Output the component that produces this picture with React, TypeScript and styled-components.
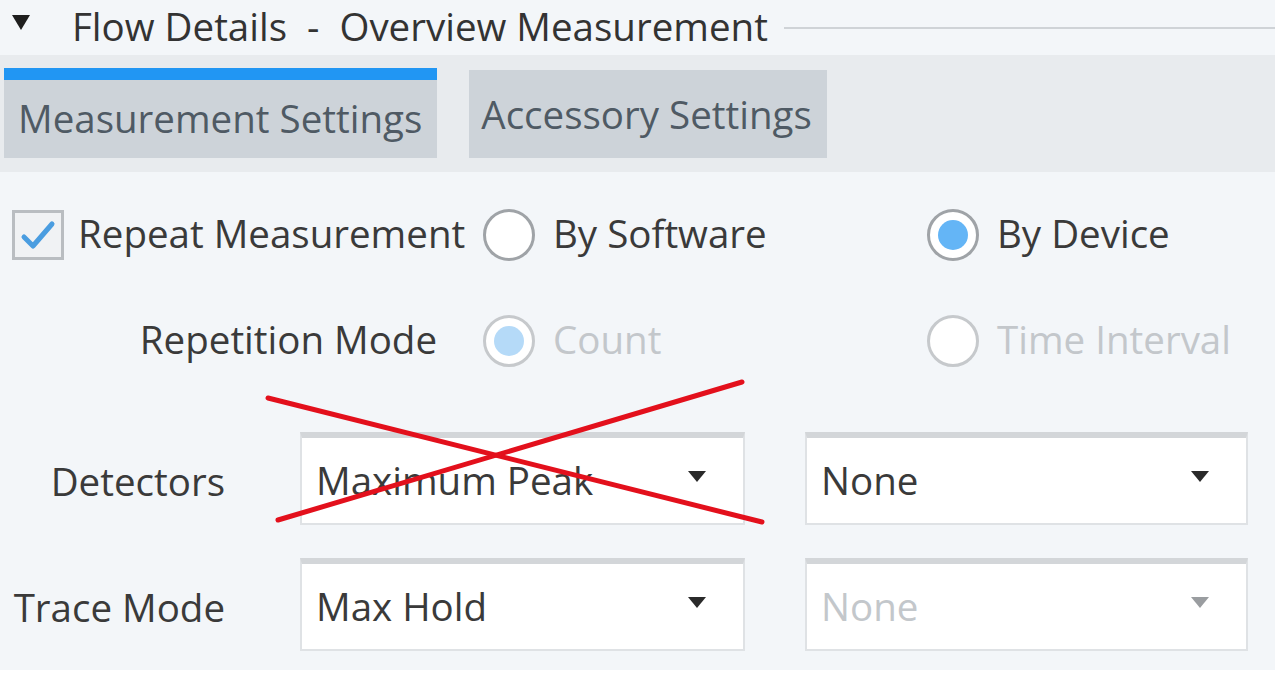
import React from "react";
import styled, { createGlobalStyle } from "styled-components";

const Global = createGlobalStyle`
  html, body { margin: 0; padding: 0; background: #ffffff; }
  body { width: 1280px; height: 693px; overflow: hidden; font-family: "Open Sans", "Noto Sans", sans-serif; }
  * { box-sizing: border-box; }
`;

const Page = styled.div`
  position: relative;
  width: 1280px;
  height: 693px;
  background: #ffffff;
  display: flex;
  flex-direction: column;
`;

const Panel = styled.div`
  width: 1275px;
  height: 670px;
  background: #f3f6f9;
  display: flex;
  flex-direction: column;
`;

const Header = styled.div`
  height: 55px;
  display: flex;
  align-items: flex-start;
  padding-left: 12px;
`;

const Caret = styled.span`
  width: 0;
  height: 0;
  border-left: 9px solid transparent;
  border-right: 9px solid transparent;
  border-top: 15px solid #1e1e1e;
  margin-top: 15px;
`;

const Title = styled.span`
  margin-left: 42px;
  font-size: 38.5px;
  color: #333333;
  white-space: pre;
  line-height: 53px;
  flex-shrink: 0;
`;

const Rule = styled.span`
  flex: 1;
  height: 2px;
  background: #cfd3d7;
  margin-left: 16px;
  margin-top: 27px;
`;

const TabBar = styled.div`
  height: 117px;
  background: #e8ebee;
  display: flex;
  align-items: flex-start;
  gap: 32px;
  padding: 13px 0 0 4px;
`;

const Tab = styled.div<{ $active?: boolean }>`
  height: ${(p) => (p.$active ? 90 : 88)}px;
  margin-top: ${(p) => (p.$active ? 0 : 2)}px;
  background: #cdd3d9;
  border-top: ${(p) => (p.$active ? "12px solid #2196f3" : "0")};
  padding: ${(p) => (p.$active ? "0 15px 2px 14px" : "0 15px 0 12px")};
  display: flex;
  align-items: center;
  font-size: 38.5px;
  color: #4f5a64;
  white-space: nowrap;
`;

const Content = styled.div`
  padding-top: 33px;
  display: flex;
  flex-direction: column;
`;

const OptionGrid = styled.div`
  display: grid;
  grid-template-columns: 483px 444px 1fr;
  grid-auto-rows: 60px;
  row-gap: 46px;
  align-items: center;
`;

const LeadCell = styled.div<{ $right?: boolean }>`
  display: flex;
  align-items: center;
  justify-content: ${(p) => (p.$right ? "flex-end" : "flex-start")};
  padding-left: ${(p) => (p.$right ? 0 : 12)}px;
  padding-right: ${(p) => (p.$right ? 46 : 0)}px;
  gap: 14px;
`;

const Text = styled.span<{ $disabled?: boolean }>`
  font-size: 38.5px;
  color: ${(p) => (p.$disabled ? "#c3c7cb" : "#3a3a3a")};
  white-space: nowrap;
  line-height: 1.25;
  margin-top: -4px;
`;

const CheckBox = styled.span`
  width: 52px;
  height: 50px;
  border: 3px solid #b9bdc1;
  background: #f0f2f4;
  display: flex;
  align-items: center;
  justify-content: center;
  flex-shrink: 0;
`;

const RadioOption = styled.div`
  display: flex;
  align-items: center;
  gap: 18px;
`;

const Radio = styled.span<{ $checked?: boolean; $disabled?: boolean }>`
  width: 52px;
  height: 52px;
  flex-shrink: 0;
  border-radius: 50%;
  border: 3px solid ${(p) => (p.$disabled ? "#c6c9cc" : "#9fa3a7")};
  background: #ffffff;
  display: flex;
  align-items: center;
  justify-content: center;
  &::after {
    content: "";
    width: 30px;
    height: 30px;
    border-radius: 50%;
    background: ${(p) => (p.$disabled ? "#b5daf8" : "#64b5f6")};
    display: ${(p) => (p.$checked ? "block" : "none")};
  }
`;

const SelectGrid = styled.div`
  margin-top: 61px;
  display: grid;
  grid-template-columns: 240px 445px 443px;
  column-gap: 60px;
  row-gap: 33px;
  grid-auto-rows: 93px;
  align-items: center;
`;

const FieldLabel = styled.span`
  justify-self: end;
  padding-right: 15px;
  font-size: 38.5px;
  color: #3a3a3a;
  white-space: nowrap;
  margin-top: 4px;
`;

const Select = styled.div<{ $disabled?: boolean }>`
  height: 93px;
  background: #ffffff;
  border: 2px solid #dfe2e5;
  border-top: 6px solid #d3d6d9;
  display: flex;
  align-items: center;
  padding: 0 37px 0 14px;
  font-size: 38.5px;
  color: ${(p) => (p.$disabled ? "#c3c7cb" : "#3a3a3a")};
`;

const SelectValue = styled.span`
  flex: 1;
  white-space: nowrap;
  margin-top: -2px;
`;

const Arrow = styled.span<{ $disabled?: boolean }>`
  width: 0;
  height: 0;
  border-left: 9px solid transparent;
  border-right: 9px solid transparent;
  border-top: 11px solid ${(p) => (p.$disabled ? "#9a9da0" : "#2a2a2a")};
  margin-top: -8px;
`;

const Cross = styled.svg`
  position: absolute;
  left: 0;
  top: 0;
  pointer-events: none;
`;

const Check = () => (
  <svg width="36" height="30" viewBox="0 0 36 30">
    <path d="M4 17 L13 26 L32 4" fill="none" stroke="#4a9de0" strokeWidth="5" strokeLinecap="round" strokeLinejoin="round" />
  </svg>
);

export default function App() {
  return (
    <Page>
      <Global />
      <Panel>
        <Header>
          <Caret />
          <Title>{"Flow Details  -  Overview Measurement"}</Title>
          <Rule />
        </Header>
        <TabBar>
          <Tab $active>Measurement Settings</Tab>
          <Tab>Accessory Settings</Tab>
        </TabBar>
        <Content>
          <OptionGrid>
            <LeadCell>
              <CheckBox>
                <Check />
              </CheckBox>
              <Text>Repeat Measurement</Text>
            </LeadCell>
            <RadioOption>
              <Radio />
              <Text>By Software</Text>
            </RadioOption>
            <RadioOption>
              <Radio $checked />
              <Text>By Device</Text>
            </RadioOption>

            <LeadCell $right>
              <Text>Repetition Mode</Text>
            </LeadCell>
            <RadioOption>
              <Radio $checked $disabled />
              <Text $disabled>Count</Text>
            </RadioOption>
            <RadioOption>
              <Radio $disabled />
              <Text $disabled>Time Interval</Text>
            </RadioOption>
          </OptionGrid>
          <SelectGrid>
            <FieldLabel>Detectors</FieldLabel>
            <Select>
              <SelectValue>Maximum Peak</SelectValue>
              <Arrow />
            </Select>
            <Select>
              <SelectValue>None</SelectValue>
              <Arrow />
            </Select>

            <FieldLabel>Trace Mode</FieldLabel>
            <Select>
              <SelectValue>Max Hold</SelectValue>
              <Arrow />
            </Select>
            <Select $disabled>
              <SelectValue>None</SelectValue>
              <Arrow $disabled />
            </Select>
          </SelectGrid>
        </Content>
      </Panel>
      <Cross width="1280" height="693" viewBox="0 0 1280 693">
        <line x1="268" y1="398" x2="762" y2="522" stroke="#e3101c" strokeWidth="5" strokeLinecap="round" />
        <line x1="278" y1="520" x2="742" y2="382" stroke="#e3101c" strokeWidth="5" strokeLinecap="round" />
      </Cross>
    </Page>
  );
}
